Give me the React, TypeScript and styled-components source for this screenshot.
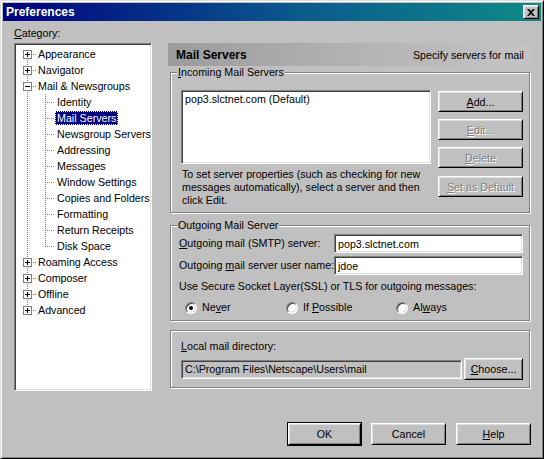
import styled, { createGlobalStyle } from 'styled-components';

const GlobalStyle = createGlobalStyle`
  html, body {
    margin: 0;
    padding: 0;
    background: #c0c0c0;
  }
  body {
    font-family: "Liberation Sans", Arial, sans-serif;
    font-size: 10.7px;
    color: #000;
  }
  * {
    box-sizing: border-box;
  }
`;

const FACE = '#c0c0c0';
const SHADOW = '#808080';
const DARK = '#404040';
const LIGHT = '#dfdfdf';

const Window = styled.div`
  width: 544px;
  height: 459px;
  background: ${FACE};
  border: 1px solid;
  border-color: ${LIGHT} #000 #000 ${LIGHT};
  box-shadow: inset 1px 1px #fff, inset -1px -1px ${SHADOW};
  padding: 2px;
  display: flex;
  flex-direction: column;
`;

const TitleBar = styled.div`
  height: 18px;
  display: flex;
  align-items: center;
  justify-content: space-between;
  padding: 0 2px 0 3px;
  background: linear-gradient(90deg, #000080 0%, #0a5a8e 55%, #0f8a86 100%);
`;

const TitleText = styled.span`
  color: #fff;
  font-weight: bold;
  font-size: 12px;
`;

const CloseButton = styled.span`
  width: 16px;
  height: 14px;
  display: flex;
  align-items: center;
  justify-content: center;
  background: ${FACE};
  border: 1px solid;
  border-color: #fff #000 #000 #fff;
  box-shadow: inset 1px 1px ${LIGHT}, inset -1px -1px ${SHADOW};
`;

const Body = styled.div`
  flex: 1;
  display: flex;
  flex-direction: column;
  padding: 6px 10px 11px 11px;
`;

const FieldLabel = styled.div`
  line-height: 13px;
  white-space: nowrap;
`;

const Mn = styled.span`
  text-decoration: underline;
`;

const MainRow = styled.div`
  display: flex;
  gap: 16px;
  margin-top: 3px;
  height: 348px;
`;

const sunken = `
  border: 1px solid;
  border-color: ${SHADOW} #fff #fff ${SHADOW};
  box-shadow: inset 1px 1px ${DARK}, inset -1px -1px ${LIGHT};
`;

const Tree = styled.div`
  width: 138px;
  flex-shrink: 0;
  ${sunken}
  background: #fff;
  padding: 2px 2px;
  overflow: hidden;
`;

const TreeRow = styled.div`
  height: 16px;
  display: flex;
  align-items: center;
`;

const Gutter = styled.svg`
  flex-shrink: 0;
  display: block;
`;

const TreeLabel = styled.span<{ $selected?: boolean }>`
  line-height: 14px;
  height: 14px;
  padding: 0 2px;
  white-space: nowrap;
  flex-shrink: 0;
  background: ${({ $selected }) => ($selected ? '#000080' : 'transparent')};
  color: ${({ $selected }) => ($selected ? '#fff' : '#000')};
  outline: ${({ $selected }) => ($selected ? '1px dotted #ffff80' : 'none')};
  outline-offset: -1px;
`;

const RightPanel = styled.div`
  flex: 1;
  display: flex;
  flex-direction: column;
`;

const Header = styled.div`
  height: 23px;
  display: flex;
  align-items: center;
  justify-content: space-between;
  padding: 0 7px 0 8px;
  background: linear-gradient(90deg, #9c9c9c 0%, #b4b4b4 55%, #c4c4c4 100%);
`;

const HeaderTitle = styled.span`
  font-weight: bold;
  font-size: 12px;
`;

const Group = styled.div<{ $mt: number }>`
  position: relative;
  margin: ${({ $mt }) => $mt}px 1px 0 2px;
  border: 1px solid ${SHADOW};
  box-shadow: inset 1px 1px #fff, 1px 1px #fff;
`;

const Legend = styled.span`
  position: absolute;
  top: -7px;
  left: 6px;
  padding: 0 1px;
  line-height: 13px;
  background: ${FACE};
`;

const IncomingBody = styled.div`
  display: grid;
  grid-template-columns: 1fr 85px;
  column-gap: 7px;
  padding: 17px 6px 5px 10px;
`;

const ServerList = styled.div`
  height: 74px;
  ${sunken}
  background: #fff;
  padding: 2px 3px;
  line-height: 13px;
`;

const HelpText = styled.p`
  margin: 4px 0 0 1px;
  line-height: 13px;
  white-space: nowrap;
`;

const ButtonStack = styled.div`
  display: flex;
  flex-direction: column;
  padding-top: 1px;
`;

const Button = styled.button<{ $w?: number; $h?: number; $mt?: number; $default?: boolean }>`
  width: ${({ $w }) => ($w ? `${$w}px` : '100%')};
  height: ${({ $h }) => $h ?? 21}px;
  margin-top: ${({ $mt }) => $mt ?? 0}px;
  flex-shrink: 0;
  padding: 0;
  font-family: inherit;
  font-size: 10.7px;
  color: #000;
  background: ${FACE};
  border: 1px solid;
  border-color: #fff #000 #000 #fff;
  box-shadow: inset 1px 1px ${LIGHT}, inset -1px -1px ${SHADOW};
  outline: ${({ $default }) => ($default ? '1px solid #000' : 'none')};
  &:disabled {
    color: ${SHADOW};
    text-shadow: 1px 1px 0 #fff;
  }
`;

const OutgoingBody = styled.div`
  padding: 8px 6px 6px 8px;
`;

const FormGrid = styled.div`
  display: grid;
  grid-template-columns: 153px 1fr;
  column-gap: 2px;
  row-gap: 3px;
  align-items: center;
`;

const TextInput = styled.div<{ $disabled?: boolean }>`
  height: 19px;
  flex: 1;
  ${sunken}
  background: ${({ $disabled }) => ($disabled ? FACE : '#fff')};
  padding: 0 3px;
  display: flex;
  align-items: center;
  white-space: nowrap;
`;

const SslText = styled.div`
  margin-top: 5px;
  line-height: 13px;
`;

const RadioRow = styled.div`
  display: grid;
  grid-template-columns: 101px 110px auto;
  margin-top: 8px;
  padding-left: 6px;
`;

const RadioOption = styled.label`
  display: flex;
  align-items: center;
  gap: 5px;
  line-height: 13px;
`;

const RadioDot = styled.span<{ $checked?: boolean }>`
  position: relative;
  flex-shrink: 0;
  width: 12px;
  height: 12px;
  border-radius: 50%;
  background: #fff;
  border: 1px solid;
  border-color: ${SHADOW} #fff #fff ${SHADOW};
  box-shadow: inset 1px 1px ${DARK}, inset -1px -1px ${LIGHT};
  &::after {
    content: '';
    display: ${({ $checked }) => ($checked ? 'block' : 'none')};
    position: absolute;
    left: 3px;
    top: 3px;
    width: 4px;
    height: 4px;
    border-radius: 50%;
    background: #000;
  }
`;

const LocalBody = styled.div`
  padding: 9px 6px 7px 10px;
`;

const DirRow = styled.div`
  display: flex;
  align-items: center;
  gap: 2px;
  margin-top: 5px;
`;

const Footer = styled.div`
  margin-top: auto;
  display: flex;
  justify-content: flex-end;
  gap: 10px;
`;

type Node = {
  label: string;
  level: 0 | 1;
  toggle?: '+' | '-';
  selected?: boolean;
  lastChild?: boolean;
};

const nodes: Node[] = [
  { label: 'Appearance', level: 0, toggle: '+' },
  { label: 'Navigator', level: 0, toggle: '+' },
  { label: 'Mail & Newsgroups', level: 0, toggle: '-' },
  { label: 'Identity', level: 1 },
  { label: 'Mail Servers', level: 1, selected: true },
  { label: 'Newsgroup Servers', level: 1 },
  { label: 'Addressing', level: 1 },
  { label: 'Messages', level: 1 },
  { label: 'Window Settings', level: 1 },
  { label: 'Copies and Folders', level: 1 },
  { label: 'Formatting', level: 1 },
  { label: 'Return Receipts', level: 1 },
  { label: 'Disk Space', level: 1, lastChild: true },
  { label: 'Roaming Access', level: 0, toggle: '+' },
  { label: 'Composer', level: 0, toggle: '+' },
  { label: 'Offline', level: 0, toggle: '+' },
  { label: 'Advanced', level: 0, toggle: '+' },
];

const dot = { stroke: SHADOW, strokeWidth: 1, strokeDasharray: '1 1' };

function TreeLines({ node, first, last }: { node: Node; first: boolean; last: boolean }) {
  if (node.level === 1) {
    return (
      <Gutter width={38} height={16}>
        <line x1={10.5} x2={10.5} y1={0} y2={16} {...dot} />
        <line x1={28.5} x2={28.5} y1={0} y2={node.lastChild ? 9 : 16} {...dot} />
        <line x1={30} x2={38} y1={8.5} y2={8.5} {...dot} />
      </Gutter>
    );
  }
  return (
    <Gutter width={19} height={16}>
      <line x1={10.5} x2={10.5} y1={first ? 8 : 0} y2={last ? 8 : 16} {...dot} />
      <line x1={16} x2={19} y1={8.5} y2={8.5} {...dot} />
      <rect x={6.5} y={4.5} width={8} height={8} fill="#fff" stroke={SHADOW} />
      <rect x={8} y={8} width={5} height={1} fill="#000" />
      {node.toggle === '+' && <rect x={10} y={6} width={1} height={5} fill="#000" />}
    </Gutter>
  );
}

export default function App() {
  return (
    <>
      <GlobalStyle />
      <Window>
        <TitleBar>
          <TitleText>Preferences</TitleText>
          <CloseButton>
            <svg width={8} height={7} viewBox="0 0 8 7">
              <path d="M0 0h2l2 2 2-2h2L5 3.5 8 7H6L4 5 2 7H0l3-3.5z" fill="#000" />
            </svg>
          </CloseButton>
        </TitleBar>
        <Body>
          <FieldLabel>
            <Mn>C</Mn>ategory:
          </FieldLabel>
          <MainRow>
            <Tree>
              {nodes.map((n, i) => (
                <TreeRow key={n.label}>
                  <TreeLines node={n} first={i === 0} last={i === nodes.length - 1} />
                  <TreeLabel $selected={n.selected}>{n.label}</TreeLabel>
                </TreeRow>
              ))}
            </Tree>
            <RightPanel>
              <Header>
                <HeaderTitle>Mail Servers</HeaderTitle>
                <span>Specify servers for mail</span>
              </Header>

              <Group $mt={6}>
                <Legend>
                  <Mn>I</Mn>ncoming Mail Servers
                </Legend>
                <IncomingBody>
                  <div>
                    <ServerList>pop3.slctnet.com (Default)</ServerList>
                    <HelpText>
                      To set server properties (such as checking for new
                      <br />
                      messages automatically), select a server and then
                      <br />
                      click Edit.
                    </HelpText>
                  </div>
                  <ButtonStack>
                    <Button>
                      <Mn>A</Mn>dd...
                    </Button>
                    <Button $mt={7} disabled>
                      <Mn>E</Mn>dit...
                    </Button>
                    <Button $mt={7} disabled>
                      <Mn>D</Mn>elete
                    </Button>
                    <Button $mt={8} disabled>
                      <Mn>S</Mn>et as Default
                    </Button>
                  </ButtonStack>
                </IncomingBody>
              </Group>

              <Group $mt={12}>
                <Legend>Outgoing Mail Server</Legend>
                <OutgoingBody>
                  <FormGrid>
                    <FieldLabel>
                      <Mn>O</Mn>utgoing mail (SMTP) server:
                    </FieldLabel>
                    <TextInput>pop3.slctnet.com</TextInput>
                    <FieldLabel>
                      Outgoing <Mn>m</Mn>ail server user name:
                    </FieldLabel>
                    <TextInput>jdoe</TextInput>
                  </FormGrid>
                  <SslText>Use Secure Socket Layer(SSL) or TLS for outgoing messages:</SslText>
                  <RadioRow>
                    <RadioOption>
                      <RadioDot $checked />
                      <span>
                        Ne<Mn>v</Mn>er
                      </span>
                    </RadioOption>
                    <RadioOption>
                      <RadioDot />
                      <span>
                        If <Mn>P</Mn>ossible
                      </span>
                    </RadioOption>
                    <RadioOption>
                      <RadioDot />
                      <span>
                        Al<Mn>w</Mn>ays
                      </span>
                    </RadioOption>
                  </RadioRow>
                </OutgoingBody>
              </Group>

              <Group $mt={9}>
                <LocalBody>
                  <FieldLabel>
                    <Mn>L</Mn>ocal mail directory:
                  </FieldLabel>
                  <DirRow>
                    <TextInput $disabled>C:\Program Files\Netscape\Users\mail</TextInput>
                    <Button $w={59} $h={22}>
                      <Mn>C</Mn>hoose...
                    </Button>
                  </DirRow>
                </LocalBody>
              </Group>
            </RightPanel>
          </MainRow>
          <Footer>
            <Button $w={73} $h={22} $default>
              OK
            </Button>
            <Button $w={75} $h={22}>
              Cancel
            </Button>
            <Button $w={75} $h={22}>
              <Mn>H</Mn>elp
            </Button>
          </Footer>
        </Body>
      </Window>
    </>
  );
}
